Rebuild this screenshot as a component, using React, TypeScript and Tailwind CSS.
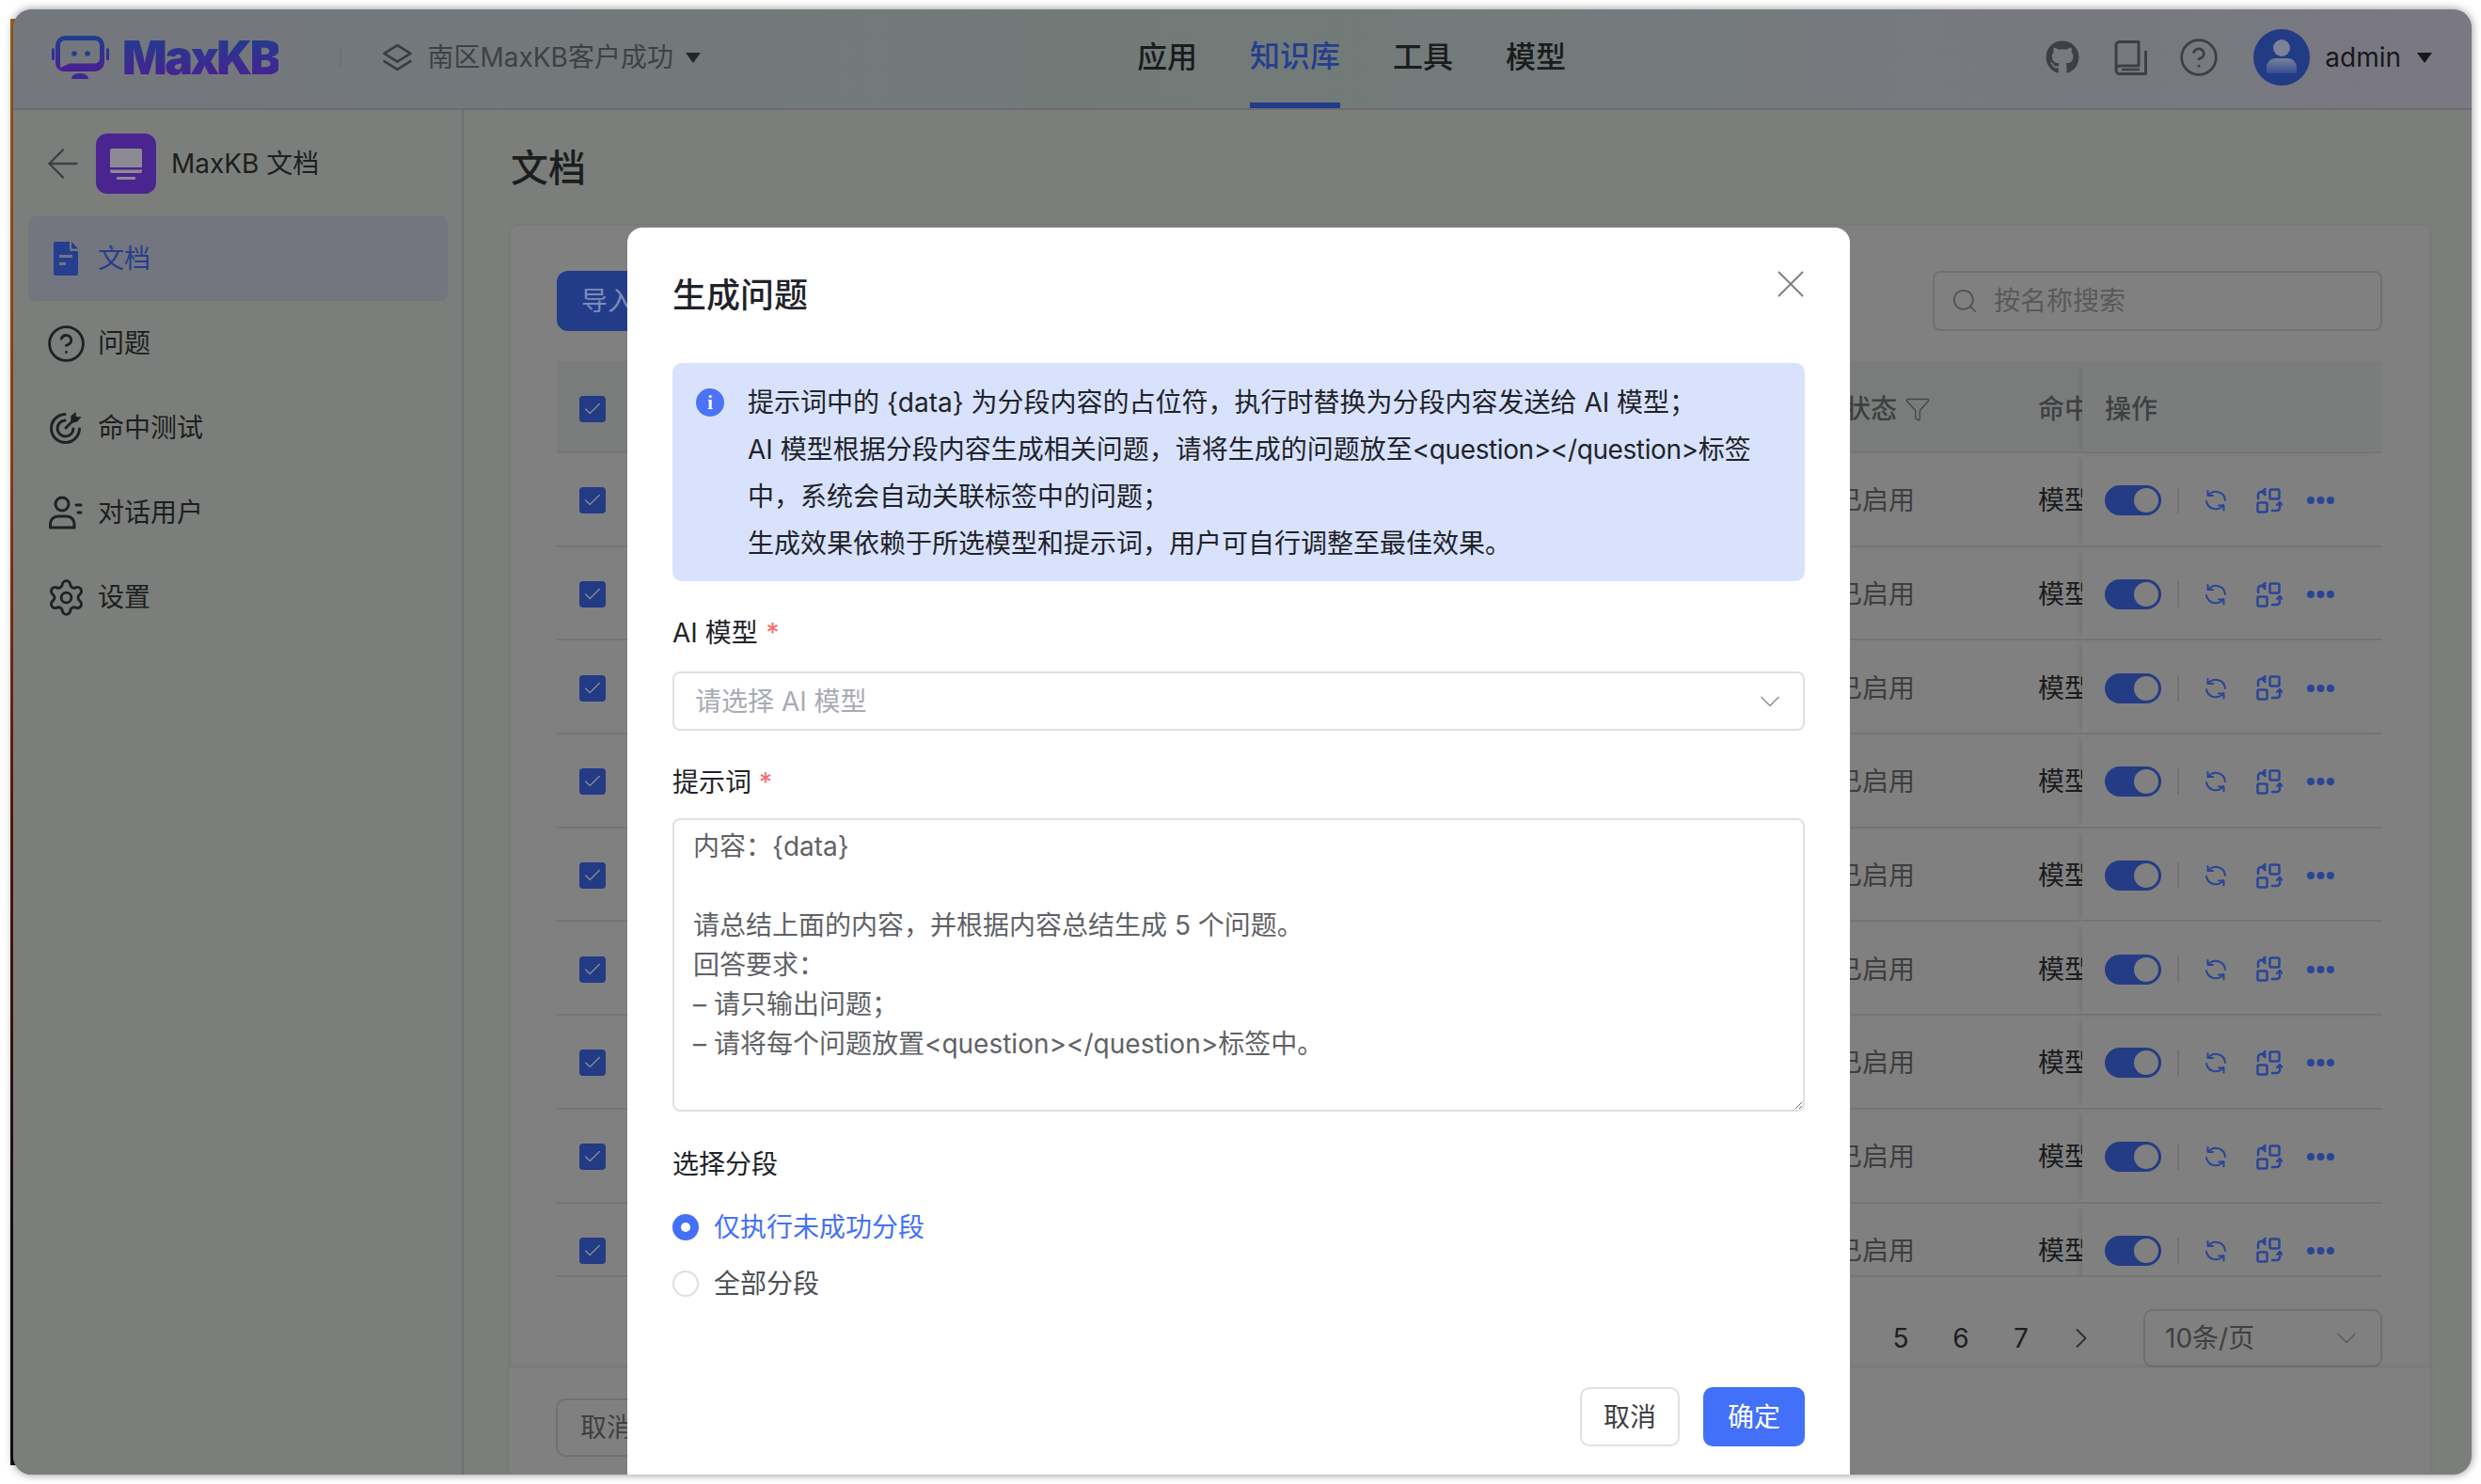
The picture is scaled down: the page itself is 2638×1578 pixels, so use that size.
import React from "react";
import { ArrowLeft, ChevronDown, ChevronRight, CircleHelp, Search, Settings, X, Funnel, Check } from "lucide-react";
import { FaGithub } from "react-icons/fa";

const FONT = '[font-family:Inter,"Noto_Sans_CJK_SC",sans-serif]';

function Logo() {
  return (
    <svg width="61" height="46" viewBox="0 0 61 46">
      <defs>
        <linearGradient id="lg" x1="0" y1="0" x2="0" y2="1">
          <stop offset="0" stopColor="#1f3f8c" />
          <stop offset="1" stopColor="#4a1f92" />
        </linearGradient>
      </defs>
      <path fillRule="evenodd" fill="url(#lg)" d="M14 0H46A10 10 0 0 1 56 10V28A10 10 0 0 1 46 38H12L10 37.5A10 10 0 0 1 4 28V10A10 10 0 0 1 14 0ZM14 5A5 5 0 0 0 9 10V34L19 29.5H46A5 5 0 0 0 51 24.5V10A5 5 0 0 0 46 5Z" />
      <rect x="0" y="13" width="3" height="13" rx="1.5" fill="url(#lg)" />
      <rect x="58" y="13" width="3" height="13" rx="1.5" fill="url(#lg)" />
      <circle cx="24" cy="19" r="2.8" fill="#1f3f8c" />
      <circle cx="38" cy="19" r="2.8" fill="#1f3f8c" />
      <path d="M21 46C21 42 25 40 30 40S39 42 39 46Z" fill="#3a2a90" />
    </svg>
  );
}

function StackIcon() {
  return (
    <svg width="33" height="30" viewBox="0 0 31 29" fill="none" stroke="#3a3d3f" strokeWidth="2.6" strokeLinejoin="round" strokeLinecap="round">
      <path d="M15.5 2L29 10.5L15.5 19L2 10.5Z" />
      <path d="M2 18.5L15.5 27L29 18.5" />
    </svg>
  );
}

function DocIcon() {
  return (
    <svg width="26" height="36" viewBox="0 0 26 36">
      <path fillRule="evenodd" fill="#253e8f" d="M2 0H17V8A2 2 0 0 0 19 10H26V34A2 2 0 0 1 24 36H2A2 2 0 0 1 0 34V2A2 2 0 0 1 2 0ZM6 14V17H20V14ZM6 22V25H13V22Z" />
      <path fill="#253e8f" d="M19 0L26 7.5H19Z" />
    </svg>
  );
}

function TargetIcon() {
  return (
    <svg width="36" height="36" viewBox="0 0 36 36" fill="none" stroke="#1f2123" strokeWidth="3" strokeLinecap="round">
      <path d="M17 3.5A15 15 0 1 0 32.5 19" />
      <path d="M17 10A8.5 8.5 0 1 0 26 19" />
      <path d="M18 18L29 7" />
      <path d="M24 12V5.5L28 2.5V7H33L29.5 11Z" fill="#1f2123" strokeWidth="1.5" />
    </svg>
  );
}

function UserIcon() {
  return (
    <svg width="36" height="36" viewBox="0 0 36 36" fill="none" stroke="#1f2123" strokeWidth="3" strokeLinecap="round">
      <circle cx="14" cy="9" r="7" />
      <path d="M1.5 34V30A8 8 0 0 1 9.5 22H19A8 8 0 0 1 27 30V34Z" strokeLinejoin="round" />
      <path d="M29 10H34M31 18H34" />
    </svg>
  );
}

function BookIcon() {
  return (
    <svg width="35" height="37" viewBox="0 0 35 37" fill="none" stroke="#3d4043" strokeWidth="3">
      <path d="M2 31V5A3.5 3.5 0 0 1 5.500 1.500H26V27H6A4 4 0 0 0 2 31A4 4 0 0 0 6 35.500H33.500V11" strokeLinejoin="round" />
      <path d="M8 31H27" strokeWidth="2.500" />
    </svg>
  );
}

function Avatar() {
  return (
    <svg width="60" height="60" viewBox="0 0 60 60">
      <defs>
        <linearGradient id="av" x1="0" y1="0" x2="0" y2="1">
          <stop offset="0" stopColor="#7a8299" />
          <stop offset="1" stopColor="#334d93" />
        </linearGradient>
      </defs>
      <circle cx="30" cy="30" r="30" fill="#213b84" />
      <circle cx="30" cy="20" r="9" fill="#7a8299" />
      <path d="M14 47V42A10 10 0 0 1 24 31H36A10 10 0 0 1 46 42V47Z" fill="url(#av)" />
    </svg>
  );
}

function RefreshIcon() {
  return (
    <svg width="24" height="24" viewBox="0 0 24 24" fill="none" stroke="#2a4596" strokeWidth="2" strokeLinecap="round" strokeLinejoin="round">
      <path d="M4 7A10 10 0 0 1 22 12" />
      <path d="M3.500 2V7H9" />
      <path d="M2 13A10 10 0 0 0 20 17" />
      <path d="M15 17.500H20.500V22.500" />
    </svg>
  );
}

function SwapIcon() {
  return (
    <svg width="28" height="27" viewBox="0 0 28 27" fill="none" stroke="#2a4596" strokeWidth="2.500" strokeLinecap="round" strokeLinejoin="round">
      <rect x="14.500" y="1.500" width="10" height="10" rx="1.500" />
      <rect x="1.500" y="15.500" width="10" height="10" rx="1.500" />
      <path d="M2 11V7A3 3 0 0 1 5 4H9.500" />
      <path d="M6.500 1L3.500 4L6.500 7" transform="translate(3 0)" />
      <path d="M25 15V21A3 3 0 0 1 22 24H17" />
      <path d="M22 18L25 15L28 18" strokeWidth="2" />
    </svg>
  );
}

function MoreIcon() {
  return (
    <svg width="29" height="8" viewBox="0 0 29 8" fill="#2a4596">
      <circle cx="4" cy="4" r="4" />
      <circle cx="14.500" cy="4" r="4" />
      <circle cx="25" cy="4" r="4" />
    </svg>
  );
}

function Caret({ className }: { className: string }) {
  return <span className={"inline-block h-0 w-0 border-x-[8px] border-t-[11px] border-x-transparent " + className} />;
}

function SideItem({ icon, label, active }: { icon: React.ReactNode; label: string; active?: boolean }) {
  return (
    <div className={"flex h-[90px] items-center rounded-[8px] " + (active ? "bg-[#73767e] text-[#253e8f]" : "text-[#1c1e20]")}>
      <span className="flex w-[74px] justify-center pl-[6px]">{icon}</span>
      <span className="text-[28px]">{label}</span>
    </div>
  );
}

function Row() {
  return (
    <div className="flex h-[99.7px] shrink-0 items-center border-b-2 border-[#737578] pt-[3px]">
      <div className="flex w-[1360px] shrink-0 items-center pl-[24px]">
        <span className="flex h-[28px] w-[28px] items-center justify-center rounded-[4px] bg-[#233a84]">
          <Check size={22} strokeWidth={1.5} color="#8a8a90" />
        </span>
      </div>
      <div className="w-[215px] shrink-0 text-[28px] text-[#3c3e40]">已启用</div>
      <div className="w-[47px] shrink-0 overflow-hidden whitespace-nowrap text-[28px] text-[#1a1c1e]">模型优化</div>
      <div className="flex h-full w-[319px] shrink-0 items-center bg-[#808080] pl-[24px] shadow-[-5px_0_6px_-3px_rgba(0,0,0,0.1)]">
        <span className="flex h-[32px] w-[60px] items-center justify-end rounded-full bg-[#233c84] pr-[3px]">
          <span className="h-[26px] w-[26px] rounded-full bg-[#808080]" />
        </span>
        <span className="ml-[17px] h-[28px] w-[2px] bg-[#6f7273]" />
        <span className="ml-[27px] flex"><RefreshIcon /></span>
        <span className="ml-[31px] flex"><SwapIcon /></span>
        <span className="ml-[26px] flex"><MoreIcon /></span>
      </div>
    </div>
  );
}

export default function App() {
  const rows = [0, 1, 2, 3, 4, 5, 6, 7, 8];
  return (
    <div className={"relative h-[1578px] w-[2638px] overflow-hidden bg-white pb-[10px] pl-[14px] pr-[10px] pt-[10px] " + FONT}>
      <div className="absolute bottom-[20px] left-[11px] top-[20px] w-[6px] bg-[linear-gradient(180deg,#a86a20,#a34a18_30%,#6a1a10_55%,#101018_85%)]" />
      <div className="relative flex h-full w-full flex-col overflow-hidden rounded-[20px] bg-[#7c7e7c] shadow-[0_0_10px_rgba(0,0,0,0.45)]">
        {/* Header */}
        <header className="flex h-[107px] shrink-0 items-stretch border-b-2 border-[#6a6d70] bg-[linear-gradient(90deg,#74777e,#727b78_50%,#7a7883)]">
          <div className="flex w-[1195px] shrink-0 items-center pb-[3px] pl-[41px]">
            <span className="flex"><Logo /></span>
            <span className="ml-[14px] bg-[linear-gradient(180deg,#1f3f8c,#4a1f92)] bg-clip-text text-[50px] font-black leading-none tracking-[-2.6px] text-transparent [font-family:Inter,sans-serif]">MaxKB</span>
            <span className="ml-[65px] h-[22px] w-[2px] bg-[#6e7176]" />
            <span className="ml-[43px] flex"><StackIcon /></span>
            <span className="ml-[15px] text-[28px] text-[#3e4144]">南区MaxKB客户成功</span>
            <Caret className="ml-[13px] border-t-[#232527]" />
          </div>
          <nav className="flex gap-[56px] text-[32px] font-medium text-[#1a1c1e]">
            <span className="flex items-center pb-[4px]">应用</span>
            <span className="flex items-center border-b-[6px] border-[#233c8a] text-[#253e8f]">知识库</span>
            <span className="flex items-center pb-[4px]">工具</span>
            <span className="flex items-center pb-[4px]">模型</span>
          </nav>
          <div className="ml-auto flex items-center pb-[3px] pr-[42px]">
            <FaGithub size={36} color="#3d4043" />
            <span className="ml-[37px] flex"><BookIcon /></span>
            <span className="ml-[33px] flex text-[#3d4043]"><CircleHelp size={44} strokeWidth={1.5} /></span>
            <span className="ml-[36px] flex"><Avatar /></span>
            <span className="ml-[16px] text-[28px] text-[#17181a]">admin</span>
            <Caret className="ml-[17px] border-t-[#17181a]" />
          </div>
        </header>

        <div className="flex min-h-0 flex-1">
          {/* Sidebar */}
          <aside className="flex w-[479px] shrink-0 flex-col border-r-2 border-[#6f7272] bg-[#7c7e7c]">
            <div className="flex items-center pl-[28px] pt-[25px]">
              <ArrowLeft size={50} strokeWidth={1.1} color="#3d4043" />
              <span className="ml-[10px] flex h-[64px] w-[64px] items-center justify-center rounded-[12px] bg-[#4a2590]">
                <svg className="mt-[4px]" width="36" height="36" viewBox="0 0 36 36">
                  <rect x="1" y="0" width="34" height="26" rx="2" fill="#8d8b92" />
                  <rect x="1" y="20" width="34" height="2.500" fill="#4a2590" />
                  <rect x="8" y="30" width="20" height="3" rx="1" fill="#8d8b92" />
                </svg>
              </span>
              <span className="ml-[16px] text-[28px] text-[#1c1e20]">MaxKB 文档</span>
            </div>
            <div className="mt-[24px] flex flex-col pl-[16px] pr-[15px]">
              <SideItem active icon={<DocIcon />} label="文档" />
              <SideItem icon={<CircleHelp size={43} strokeWidth={1.6} color="#1f2123" />} label="问题" />
              <SideItem icon={<TargetIcon />} label="命中测试" />
              <SideItem icon={<UserIcon />} label="对话用户" />
              <SideItem icon={<Settings size={43} strokeWidth={1.6} color="#1f2123" />} label="设置" />
            </div>
          </aside>

          {/* Main */}
          <main className="flex min-w-0 flex-1 flex-col">
            <div className="flex h-[123px] shrink-0 items-center pl-[50px]">
              <h1 className="text-[40px] font-medium leading-none text-[#1c1e20]">文档</h1>
            </div>
            <section className="ml-[50px] mr-[45px] min-h-0 flex-1 rounded-t-[8px] bg-[#808080] pl-[49px] pr-[50px] pt-[48px] shadow-[0_0_4px_rgba(0,0,0,0.1)]">
              <div className="flex h-[64px] items-center justify-between">
                <span className="flex h-[64px] w-[140px] items-center rounded-[12px] bg-[#233c8a] pl-[26px] text-[28px] text-[#7d8cb8]">导入文档</span>
                <div className="flex h-[64px] w-[478px] items-center rounded-[8px] border-2 border-[#6e7072] pl-[17px]">
                  <Search size={30} strokeWidth={1.4} color="#505254" />
                  <span className="ml-[16px] text-[28px] text-[#58595b]">按名称搜索</span>
                </div>
              </div>
              <div className="mt-[32px] flex h-[974px] flex-col overflow-hidden border-b-2 border-[#737578]">
                <div className="flex h-[98px] shrink-0 items-center border-b-2 border-[#737578] bg-[#7a7c7c] pt-[5px] text-[28px] font-medium text-[#3e4042]">
                  <div className="flex w-[1369px] shrink-0 items-center pl-[24px]">
                    <span className="flex h-[28px] w-[28px] items-center justify-center rounded-[4px] bg-[#233a84]">
                      <Check size={22} strokeWidth={1.5} color="#8a8a90" />
                    </span>
                  </div>
                  <div className="flex w-[206px] shrink-0 items-center gap-[8px]">状态<Funnel size={28} strokeWidth={1.2} color="#45474a" /></div>
                  <div className="w-[47px] shrink-0 overflow-hidden whitespace-nowrap">命中处理方式</div>
                  <div className="flex h-full w-[319px] shrink-0 items-center bg-[#7b7d7d] pl-[24px] shadow-[-5px_0_6px_-3px_rgba(0,0,0,0.1)]">操作</div>
                </div>
                {rows.map((r) => <Row key={r} />)}
              </div>
              <div className="mt-[34px] flex items-center justify-end text-[28px] text-[#1c1e20]">
                <span className="w-[64px] text-center">5</span>
                <span className="w-[64px] text-center">6</span>
                <span className="w-[64px] text-center">7</span>
                <span className="flex w-[64px] justify-center"><ChevronRight size={36} strokeWidth={1.2} color="#2c2e30" /></span>
                <div className="ml-[34px] flex h-[62px] w-[254px] items-center justify-between rounded-[10px] border-2 border-[#6e7072] pl-[21px] pr-[18px] text-[#3e4042]">
                  <span>10条/页</span>
                  <ChevronDown size={36} strokeWidth={1.1} color="#5a5c5e" />
                </div>
              </div>
            </section>
            <div className="ml-[48px] mr-[44px] flex h-[114px] shrink-0 items-center bg-[#808080] pl-[50px] pt-[14px] shadow-[0_-2px_6px_rgba(0,0,0,0.08)]">
              <span className="flex h-[62px] w-[140px] items-center rounded-[10px] border-2 border-[#6e7072] pl-[24px] text-[28px] text-[#3e4042]">取消</span>
            </div>
          </main>
        </div>

        {/* Modal */}
        <div className="absolute left-[653px] top-[232px] h-[1400px] w-[1300px] rounded-[16px] bg-white px-[48px] pt-[48px] text-[28px]">
          <div className="flex h-[48px] items-center justify-between">
            <h2 className="text-[36px] font-medium leading-none text-[#1f2329]">生成问题</h2>
            <span className="-mr-[10px] -mt-[24px] flex"><X size={50} strokeWidth={1} color="#7f8388" /></span>
          </div>
          <div className="mt-[48px] flex h-[232px] rounded-[10px] bg-[#d8e2fc] pl-[25px] pt-[17px] leading-[50px] text-[#1f2329]">
            <span className="mt-[10px] flex h-[30px] w-[30px] shrink-0 items-center justify-center rounded-full bg-[#4a73f5] text-[20px] font-bold leading-none text-white [font-family:'Liberation_Serif',serif]">i</span>
            <div className="ml-[25px] whitespace-nowrap">
              <div>提示词中的 {"{data}"} 为分段内容的占位符，执行时替换为分段内容发送给 AI 模型；</div>
              <div>AI 模型根据分段内容生成相关问题，请将生成的问题放至<span className="tracking-[-0.4px]">&lt;question&gt;&lt;/question&gt;</span>标签</div>
              <div>中，系统会自动关联标签中的问题；</div>
              <div>生成效果依赖于所选模型和提示词，用户可自行调整至最佳效果。</div>
            </div>
          </div>
          <div className="mt-[33px] h-[44px] leading-[44px] text-[#1f2329]">AI 模型 <span className="ml-[1px] text-[#f56c6c]">*</span></div>
          <div className="mt-[19px] flex h-[63px] items-center justify-between rounded-[8px] border-2 border-[#dee0e3] pl-[22px] pr-[17px] text-[#a8abb2]">
            <span>请选择 AI 模型</span>
            <ChevronDown size={36} strokeWidth={1.1} color="#8f9399" />
          </div>
          <div className="mt-[33px] h-[44px] leading-[44px] text-[#1f2329]">提示词 <span className="text-[#f56c6c]">*</span></div>
          <textarea
            readOnly
            className="mt-[16px] block h-[312px] w-full resize-y rounded-[8px] border-2 border-[#dee0e3] px-[20px] pt-[7px] text-[28px] leading-[42px] text-[#606266] outline-none"
            defaultValue={"内容：{data}\n\n请总结上面的内容，并根据内容总结生成 5 个问题。\n回答要求：\n– 请只输出问题；\n– 请将每个问题放置<question></question>标签中。"}
          />
          <div className="mt-[34px] h-[44px] leading-[44px] text-[#1f2329]">选择分段</div>
          <div className="mt-[25px] flex h-[40px] items-center text-[#4470f7]">
            <span className="flex h-[28px] w-[28px] items-center justify-center rounded-full bg-[#4470f7]">
              <span className="h-[10px] w-[10px] rounded-full bg-white" />
            </span>
            <span className="ml-[16px]">仅执行未成功分段</span>
          </div>
          <div className="mt-[20px] flex h-[40px] items-center text-[#4d5055]">
            <span className="h-[28px] w-[28px] rounded-full border-2 border-[#dcdfe6]" />
            <span className="ml-[16px]">全部分段</span>
          </div>
          <div className="mt-[90px] flex justify-end gap-[25px]">
            <span className="flex h-[63px] w-[106px] items-center justify-center rounded-[10px] border-2 border-[#dee0e3] text-[#3c3f44]">取消</span>
            <span className="flex h-[63px] w-[108px] items-center justify-center rounded-[10px] bg-[#4270f8] text-white">确定</span>
          </div>
        </div>
      </div>
    </div>
  );
}
